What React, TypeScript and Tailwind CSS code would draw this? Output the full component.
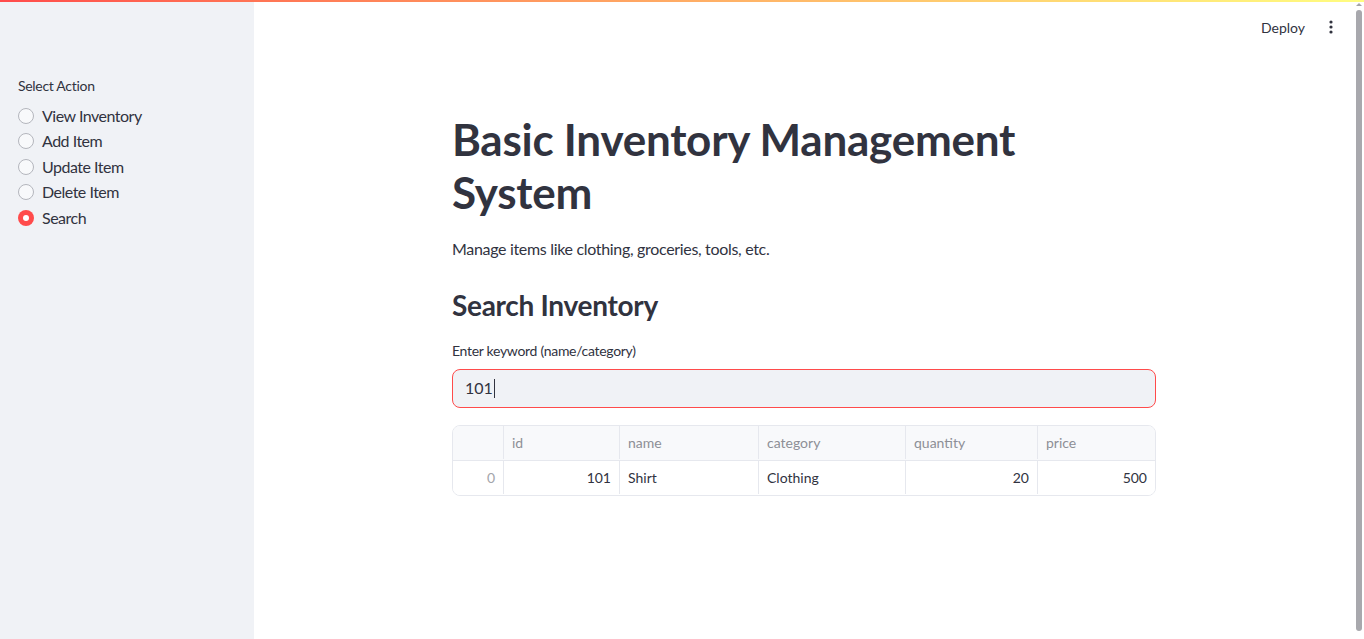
import React from "react";

const font = { fontFamily: '"Source Sans Pro", Lato, "Noto Sans", sans-serif' };

function Radio({ label, checked }: { label: string; checked?: boolean }) {
  return (
    <div className="flex items-center h-[25.5px]">
      {checked ? (
        <div className="w-4 h-4 rounded-full bg-[#ff4b4b] flex items-center justify-center">
          <div className="w-[6px] h-[6px] rounded-full bg-white" />
        </div>
      ) : (
        <div className="w-4 h-4 rounded-full border border-[#b4b6bd] bg-[#f8f9fb]" />
      )}
      <span className="ml-2 text-[16px] text-[#31333f] leading-none tracking-[-0.5px]">{label}</span>
    </div>
  );
}

export default function App() {
  const cols = [
    { name: "", w: "w-[50px]" },
    { name: "id", w: "w-[116px]" },
    { name: "name", w: "w-[139px]" },
    { name: "category", w: "w-[147px]" },
    { name: "quantity", w: "w-[132px]" },
    { name: "price", w: "flex-1" },
  ];
  return (
    <div className="w-[1364px] h-[639px] flex flex-col bg-white overflow-hidden" style={font}>
      <div className="h-[2px] w-full bg-gradient-to-r from-[#ff4b4b] to-[#fffd80]" />
      <div className="flex flex-1 min-h-0">
        <aside className="w-[254px] bg-[#f0f2f6] flex flex-col px-[18px] pt-[73px]">
          <div className="text-[14px] text-[#31333f] leading-[22px] mb-[6px] tracking-[-0.3px]">Select Action</div>
          <Radio label="View Inventory" />
          <Radio label="Add Item" />
          <Radio label="Update Item" />
          <Radio label="Delete Item" />
          <Radio label="Search" checked />
        </aside>
        <main className="flex-1 flex flex-col min-w-0">
          <div className="h-[52px] flex items-center justify-end pr-[14px] pb-[2px]">
            <span className="text-[14px] text-[#31333f] mr-[18px]">Deploy</span>
            <svg width="16" height="16" viewBox="0 0 16 16" className="mr-[1px]">
              <circle cx="8" cy="3" r="1.6" fill="#31333f" />
              <circle cx="8" cy="8" r="1.6" fill="#31333f" />
              <circle cx="8" cy="13" r="1.6" fill="#31333f" />
            </svg>
          </div>
          <div className="w-[704px] mx-auto flex flex-col pt-[59px]">
            <h1 className="text-[44px] font-bold leading-[53px] text-[#31333f] tracking-[-0.25px]">
              Basic Inventory Management System
            </h1>
            <p className="mt-[17px] text-[16px] leading-[26px] text-[#31333f] tracking-[-0.32px]">
              Manage items like clothing, groceries, tools, etc.
            </p>
            <h3 className="mt-[26px] text-[28px] font-bold leading-[34px] text-[#31333f] tracking-[-0.3px]">Search Inventory</h3>
            <label className="mt-[18px] text-[14px] leading-[22px] text-[#31333f] tracking-[-0.3px]">Enter keyword (name/category)</label>
            <div className="mt-[7px] h-[39px] rounded-[8px] border border-[#ff4b4b] bg-[#f0f2f6] flex items-center px-[12px] pb-[1px]">
              <span className="text-[16px] text-[#31333f]">101</span>
              <span className="w-px h-[19px] bg-[#31333f] ml-[1px]" />
            </div>
            <div className="mt-[17px] rounded-[8px] border border-[#e6e8ee] overflow-hidden">
              <div className="flex h-[35px] bg-[#f8f9fb] border-b border-[#e6e8ee] pb-[1px]">
                {cols.map((c, i) => (
                  <div
                    key={i}
                    className={`${c.w} flex items-center px-[8px] text-[14px] text-[#8d8f96] ${i > 0 ? "border-l border-[#e6e8ee]" : ""}`}
                  >
                    {c.name}
                  </div>
                ))}
              </div>
              <div className="flex h-[34px] bg-white pb-[1px]">
                <div className="w-[50px] flex items-center justify-end px-[8px] text-[14px] text-[#a3a5ab]">0</div>
                <div className="w-[116px] flex items-center justify-end px-[8px] text-[14px] text-[#31333f] border-l border-[#e6e8ee]">101</div>
                <div className="w-[139px] flex items-center px-[8px] text-[14px] text-[#31333f] border-l border-[#e6e8ee]">Shirt</div>
                <div className="w-[147px] flex items-center px-[8px] text-[14px] text-[#31333f] border-l border-[#e6e8ee]">Clothing</div>
                <div className="w-[132px] flex items-center justify-end px-[8px] text-[14px] text-[#31333f] border-l border-[#e6e8ee]">20</div>
                <div className="flex-1 flex items-center justify-end px-[8px] text-[14px] text-[#31333f] border-l border-[#e6e8ee]">500</div>
              </div>
            </div>
          </div>
        </main>
        <div className="w-[10px] flex flex-col items-center pt-[1px] pb-[8px] pr-[1px]">
          <div className="w-0 h-0 border-l-[3px] border-r-[3px] border-b-[3px] border-l-transparent border-r-transparent border-b-[#a3a3a8]" />
          <div className="mt-[4px] w-[6px] flex-1 rounded-full bg-[#a8a8ad]" />
        </div>
      </div>
    </div>
  );
}
